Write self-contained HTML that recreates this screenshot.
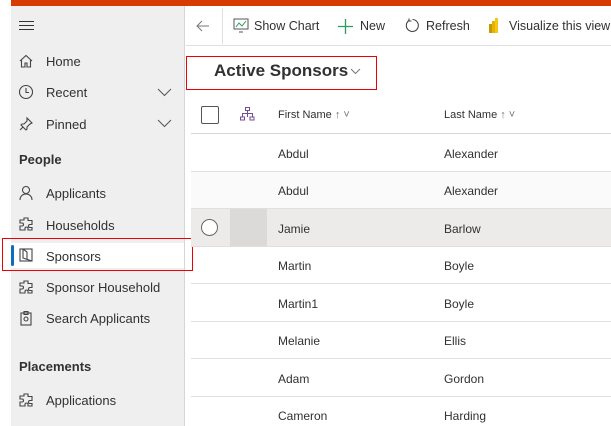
<!DOCTYPE html>
<html><head><style>
*{margin:0;padding:0;box-sizing:border-box}
body{width:611px;height:426px;overflow:hidden;background:#fff;font-family:"Liberation Sans",sans-serif;color:#323130;position:relative}
.a{position:absolute;white-space:nowrap}
.top{left:11px;top:0;width:600px;height:6px;background:#d83b01}
.side{left:11px;top:6px;width:174px;height:420px;background:#efefef;border-right:1px solid #d6d6d6}
.nav{position:absolute;left:46px;font-size:13px;color:#323130;white-space:nowrap}
.ic{position:absolute;left:18px}
.hd{position:absolute;left:19px;font-size:13px;font-weight:bold;color:#323130}
.tb{font-size:12.5px;color:#323130;top:19px}
.row{left:191px;width:420px;height:1px;background:#e1dfdd}
.c{font-size:12px;color:#323130}
</style></head><body>
<div class="a top"></div>
<div class="a side"></div>
<div class="a" style="left:19px;top:21px;width:15px;height:1px;background:#333;box-shadow:0 4px 0 #333,0 8px 0 #333"></div>
<svg class="ic" style="top:53px" width="16" height="16" viewBox="0 0 16 16" fill="none" stroke="#444" stroke-width="1.1"><path d="M2 8L8 2.5 14 8M3.5 6.5V14h3.5v-4h2v4h3.5V6.5"/></svg>
<div class="nav" style="top:54px">Home</div>
<svg class="ic" style="top:84px" width="16" height="16" viewBox="0 0 16 16" fill="none" stroke="#444" stroke-width="1.1"><circle cx="8" cy="8" r="6.5"/><path d="M8 4v4.5h3"/></svg>
<div class="nav" style="top:85px">Recent</div>
<svg class="a" style="left:157px;top:88px" width="15" height="9" viewBox="0 0 15 9" fill="none" stroke="#555"><path d="M1 1l6.5 6.5L14 1"/></svg>
<svg class="ic" style="top:116px" width="16" height="16" viewBox="0 0 16 16" fill="none" stroke="#444" stroke-width="1.1"><path d="M9 2l5 5-2 1-3 3 0 2-1 1-5-5 1-1h2l3-3zM5 11l-3 3"/></svg>
<div class="nav" style="top:117px">Pinned</div>
<svg class="a" style="left:157px;top:119px" width="15" height="9" viewBox="0 0 15 9" fill="none" stroke="#555"><path d="M1 1l6.5 6.5L14 1"/></svg>
<div class="hd" style="top:152px">People</div>
<svg class="ic" style="top:185px" width="16" height="16" viewBox="0 0 16 16" fill="none" stroke="#444" stroke-width="1.1"><circle cx="8" cy="5" r="3.5"/><path d="M2 15c0-4 3-6 6-6s6 2 6 6"/></svg>
<div class="nav" style="top:186px">Applicants</div>
<svg class="ic" style="top:216px" width="16" height="16" viewBox="0 0 16 16" fill="none" stroke="#444" stroke-width="1.1"><path d="M6 2h4v2.5H14v4h-2a1.5 1.5 0 0 0 0 3h2V14H10v-1.5a1.5 1.5 0 0 0-3 0V14H2v-4h2a1.5 1.5 0 0 0 0-3H2V4h4z"/></svg>
<div class="nav" style="top:218px">Households</div>
<div class="a" style="left:11px;top:243px;width:173px;height:25px;background:#fff"></div>
<div class="a" style="left:11px;top:245px;width:3px;height:21px;background:#0f6cbd;border-radius:2px"></div>
<div class="a" style="left:2px;top:238px;width:191px;height:33px;border:1px solid #e00"></div>
<svg class="ic" style="top:247px" width="16" height="16" viewBox="0 0 16 16" fill="none" stroke="#444" stroke-width="1.1"><rect x="2" y="2" width="12" height="12"/><path d="M5 2v9l9 3M5 2l4 3v7"/></svg>
<div class="nav" style="top:249px">Sponsors</div>
<svg class="ic" style="top:279px" width="16" height="16" viewBox="0 0 16 16" fill="none" stroke="#444" stroke-width="1.1"><path d="M6 2h4v2.5H14v4h-2a1.5 1.5 0 0 0 0 3h2V14H10v-1.5a1.5 1.5 0 0 0-3 0V14H2v-4h2a1.5 1.5 0 0 0 0-3H2V4h4z"/></svg>
<div class="nav" style="top:280px">Sponsor Household</div>
<svg class="ic" style="top:310px" width="16" height="16" viewBox="0 0 16 16" fill="none" stroke="#444" stroke-width="1.1"><rect x="3" y="3" width="10" height="12"/><path d="M6 1.5h4v3H6z"/><circle cx="8" cy="9" r="2"/></svg>
<div class="nav" style="top:311px">Search Applicants</div>
<div class="hd" style="top:359px">Placements</div>
<svg class="ic" style="top:392px" width="16" height="16" viewBox="0 0 16 16" fill="none" stroke="#444" stroke-width="1.1"><path d="M6 2h4v2.5H14v4h-2a1.5 1.5 0 0 0 0 3h2V14H10v-1.5a1.5 1.5 0 0 0-3 0V14H2v-4h2a1.5 1.5 0 0 0 0-3H2V4h4z"/></svg>
<div class="nav" style="top:393px">Applications</div>

<div class="a" style="left:186px;top:45px;width:425px;height:1px;background:#e1dfdd"></div>
<div class="a" style="left:222px;top:8px;width:1px;height:36px;background:#e1dfdd"></div>
<svg class="a" style="left:196px;top:19px" width="14" height="14" viewBox="0 0 14 14" fill="none" stroke="#777"><path d="M13 7H1M6 2L1 7l5 5"/></svg>
<svg class="a" style="left:233px;top:18px" width="16" height="15" viewBox="0 0 16 15" fill="none" stroke="#555"><rect x="1" y="1" width="14" height="10"/><path d="M3 9l3-4 3 3 4-5" stroke="#2a9d5c"/><path d="M6 14h4"/></svg>
<div class="a tb" style="left:254px">Show Chart</div>
<svg class="a" style="left:338px;top:19px" width="15" height="15" viewBox="0 0 15 15" stroke="#2a9d5c" stroke-width="1.3"><path d="M7.5 0v15M0 7.5h15"/></svg>
<div class="a tb" style="left:360px">New</div>
<svg class="a" style="left:405px;top:18px" width="15" height="15" viewBox="0 0 15 15" fill="none" stroke="#444" stroke-width="1.1"><path d="M4 2.5A6 6 0 1 0 7.5 1.5M4 0.5v2.5h2.5"/></svg>
<div class="a tb" style="left:426px">Refresh</div>
<div class="a" style="left:489px;top:24px;width:3px;height:9px;background:#c19c00"></div>
<div class="a" style="left:492px;top:21px;width:3px;height:12px;background:#e8b300"></div>
<div class="a" style="left:495px;top:18px;width:3px;height:15px;background:#f2c811"></div>
<div class="a tb" style="left:509px">Visualize this view</div>

<div class="a" style="left:186px;top:56px;width:191px;height:34px;border:1px solid #e00"></div>
<div class="a" style="left:214px;top:61px;font-size:17px;font-weight:bold;color:#323130">Active Sponsors</div>
<svg class="a" style="left:350px;top:68px" width="11" height="7" viewBox="0 0 11 7" fill="none" stroke="#777"><path d="M1 1l4.5 4.5L10 1"/></svg>

<div class="a" style="left:201px;top:106px;width:18px;height:18px;border:1px solid #555;border-radius:2px"></div>
<svg class="a" style="left:240px;top:107px" width="15" height="14" viewBox="0 0 15 14" fill="none" stroke="#7a4a9a"><rect x="5.5" y="0.5" width="4" height="3"/><rect x="0.5" y="10" width="4" height="3"/><rect x="10" y="10" width="4" height="3"/><path d="M7.5 3.5v3M2.5 10V6.5h10V10M7.5 6.5V10"/></svg>
<div class="a c" style="left:278px;top:109px;font-size:11px">First Name <span style="color:#777">↑ ˅</span></div>
<div class="a c" style="left:444px;top:109px;font-size:11px">Last Name <span style="color:#777">↑ ˅</span></div>
<div class="a row" style="top:133px;background:#d6d6d6"></div>

<div class="a" style="left:191px;top:172px;width:420px;height:36px;background:#fafafa"></div>
<div class="a" style="left:191px;top:209px;width:420px;height:37px;background:#edebe9"></div>
<div class="a" style="left:230px;top:209px;width:37px;height:37px;background:#dcdad8"></div>
<div class="a" style="left:201px;top:219px;width:17px;height:17px;border:1px solid #666;border-radius:50%;background:#fff"></div>

<div class="a row" style="top:171px"></div>
<div class="a row" style="top:208px"></div>
<div class="a row" style="top:246px"></div>
<div class="a row" style="top:283px"></div>
<div class="a row" style="top:321px"></div>
<div class="a row" style="top:358px"></div>
<div class="a row" style="top:396px"></div>

<div class="a c" style="left:278px;top:147px">Abdul</div><div class="a c" style="left:444px;top:147px">Alexander</div>
<div class="a c" style="left:278px;top:184px">Abdul</div><div class="a c" style="left:444px;top:184px">Alexander</div>
<div class="a c" style="left:278px;top:222px">Jamie</div><div class="a c" style="left:444px;top:222px">Barlow</div>
<div class="a c" style="left:278px;top:259px">Martin</div><div class="a c" style="left:444px;top:259px">Boyle</div>
<div class="a c" style="left:278px;top:297px">Martin1</div><div class="a c" style="left:444px;top:297px">Boyle</div>
<div class="a c" style="left:278px;top:334px">Melanie</div><div class="a c" style="left:444px;top:334px">Ellis</div>
<div class="a c" style="left:278px;top:372px">Adam</div><div class="a c" style="left:444px;top:372px">Gordon</div>
<div class="a c" style="left:278px;top:409px">Cameron</div><div class="a c" style="left:444px;top:409px">Harding</div>
</body></html>
